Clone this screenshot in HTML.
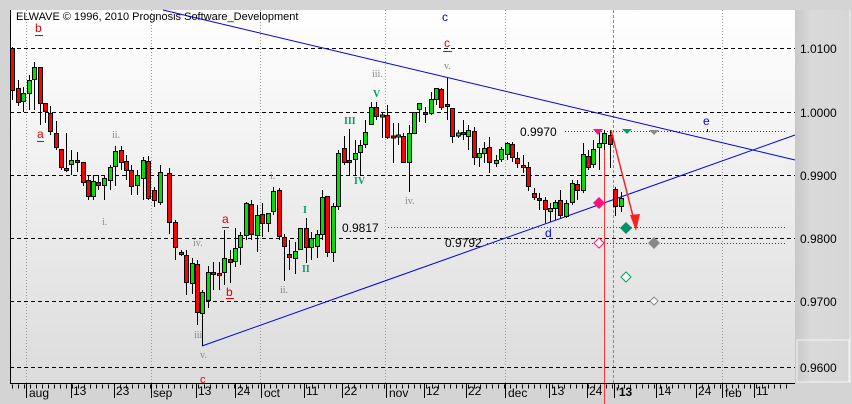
<!DOCTYPE html>
<html><head><meta charset="utf-8"><style>
html,body{margin:0;padding:0;background:#d4d4d4;}
svg{display:block;font-family:"Liberation Sans",sans-serif;}
</style></head><body>
<svg width="852" height="404" viewBox="0 0 852 404" xmlns="http://www.w3.org/2000/svg">
<defs>
<linearGradient id="bg" x1="0" y1="0" x2="0" y2="1"><stop offset="0" stop-color="#ffffff"/><stop offset="1" stop-color="#dcdcdc"/></linearGradient>
<linearGradient id="ax" x1="0" y1="0" x2="1" y2="0"><stop offset="0" stop-color="#c8c8c8"/><stop offset="0.3" stop-color="#dadada"/><stop offset="1" stop-color="#d6d6d6"/></linearGradient>
</defs>
<rect x="0" y="0" width="852" height="404" fill="#d4d4d4"/>
<rect x="10" y="10" width="785" height="373" fill="url(#bg)"/>
<rect x="795" y="10" width="55" height="373" fill="url(#ax)"/>
<rect x="797" y="340" width="52" height="42" fill="none" stroke="#f4f4f4" stroke-width="1"/>
<line x1="850" y1="10" x2="850" y2="383" stroke="#f0f0f0"/>
<line x1="10.5" y1="10" x2="10.5" y2="384" stroke="#000"/>
<!-- vertical grid -->
<g stroke="#999" stroke-dasharray="1,2">
<line x1="26.5" y1="10" x2="26.5" y2="383"/>
<line x1="151.5" y1="10" x2="151.5" y2="383"/>
<line x1="260.5" y1="10" x2="260.5" y2="383"/>
<line x1="385.5" y1="10" x2="385.5" y2="383"/>
<line x1="505.5" y1="10" x2="505.5" y2="383"/>
<line x1="722.5" y1="10" x2="722.5" y2="383"/>
</g>
<line x1="613.5" y1="10" x2="613.5" y2="383" stroke="#888" stroke-dasharray="3,2"/>
<!-- horizontal dashed -->
<g stroke="#000" stroke-dasharray="4,3">
<line x1="10" y1="48.5" x2="795" y2="48.5"/>
<line x1="10" y1="112.5" x2="795" y2="112.5"/>
<line x1="10" y1="175.5" x2="795" y2="175.5"/>
<line x1="10" y1="238.5" x2="795" y2="238.5"/>
<line x1="10" y1="301.5" x2="795" y2="301.5"/>
<line x1="10" y1="367.5" x2="795" y2="367.5"/>
</g>
<text x="16" y="20" font-size="11" fill="#000">ELWAVE © 1996, 2010 Prognosis Software_Development</text>
<!-- red dotted levels -->
<g stroke="#e00000" stroke-dasharray="1,2">
<line x1="565" y1="131.5" x2="787" y2="131.5"/>
<line x1="388" y1="227.5" x2="786" y2="227.5"/>
<line x1="487" y1="243.5" x2="786" y2="243.5"/>
</g>
<text x="520" y="136" font-size="12" fill="#000">0.9970</text>
<text x="342" y="232" font-size="12" fill="#000">0.9817</text>
<text x="445" y="247" font-size="12" fill="#000">0.9792</text>
<!-- trend lines -->
<line x1="163" y1="10" x2="795" y2="160" stroke="#0000e0" stroke-width="1"/>
<line x1="202" y1="346" x2="795" y2="135" stroke="#0000e0" stroke-width="1"/>
<!-- red vertical -->
<line x1="604.5" y1="130" x2="604.5" y2="404" stroke="#ff3030" stroke-width="1"/>
<!-- candles wicks -->
<path stroke="#000" stroke-width="1" fill="none" d="
M12.5 47V100M18.5 80V106M23.5 87V112M29.5 75V110M34.5 62V110M40.5 67V125M45.5 103V123M50.5 106V135M56.5 121V150M61.5 149V170M66.5 133V172M71.5 150V175M77.5 152V172M83.5 162V186M88.5 175V200M93.5 175V200M98.5 175V190M104.5 175V200M110.5 165V190M115.5 146V186M121.5 146V170M126.5 155V180M131.5 165V195M137.5 170V195M143.5 157V200M148.5 156V200M154.5 187V207M160.5 165V205M169.5 168V234M175.5 220V260M181.5 250V256M186.5 250V295M192.5 258V294M197.5 260V325M202.5 290V346M208.5 266V308M213.5 262V290M219.5 262V290M224.5 230V285M230.5 250V283M235.5 228V267M240.5 232V265M246.5 202V240M251.5 200V240M257.5 205V252M262.5 203V237M268.5 213V232M273.5 187V215M279.5 188V240M284.5 234V281M289.5 240V270M295.5 242V274M300.5 228V250M306.5 218V263M311.5 232V260M317.5 230V258M322.5 190V240M327.5 196V257M333.5 203V262M338.5 150V210M344.5 136V165M349.5 129V175M355.5 140V175M360.5 140V175M365.5 120V148M371.5 102V125M376.5 102V120M382.5 113V138M387.5 105V139M393.5 123V163M398.5 123V145M403.5 133V163M409.5 125V192M414.5 112V133M419.5 103V122M425.5 107V123M431.5 92V115M436.5 88V105M441.5 88V110M447.5 78V120M452.5 108V143M458.5 130V138M463.5 120V140M468.5 125V150M474.5 127V165M479.5 148V167M484.5 142V163M489.5 137V173M496.5 155V167M501.5 147V162M507.5 142V160M512.5 142V162M517.5 152V168M523.5 155V173M528.5 162V191M534.5 188V200M539.5 193V210M545.5 197V223M550.5 203V222M555.5 200V220M560.5 190V218M566.5 200V218M572.5 180V205M577.5 180V200M583.5 143V193M588.5 150V170M593.5 140V168M599.5 130V170M604.5 130V150M610.5 130V168M615.5 187V216M621.5 192V212"/>
<g stroke="#000" stroke-width="1" fill="#ff0000">
<rect x="10.5" y="48.5" width="4" height="42"/><rect x="16.5" y="88.5" width="4" height="14"/><rect x="38.5" y="67.5" width="4" height="36"/><rect x="43.5" y="103.5" width="4" height="8"/><rect x="48.5" y="113.5" width="4" height="18"/><rect x="54.5" y="133.5" width="4" height="14"/><rect x="59.5" y="149.5" width="4" height="18"/><rect x="64.5" y="168.5" width="4" height="2"/><rect x="75.5" y="160.5" width="4" height="2"/><rect x="81.5" y="162.5" width="4" height="20"/><rect x="86.5" y="180.5" width="4" height="16"/><rect x="96.5" y="182.5" width="4" height="3"/><rect x="119.5" y="150.5" width="4" height="12"/><rect x="124.5" y="161.5" width="4" height="9"/><rect x="129.5" y="170.5" width="4" height="16"/><rect x="146.5" y="161.5" width="4" height="37"/><rect x="152.5" y="190.5" width="4" height="10"/><rect x="167.5" y="173.5" width="4" height="49"/><rect x="173.5" y="222.5" width="4" height="25"/><rect x="179.5" y="252.5" width="4" height="2"/><rect x="184.5" y="255.5" width="4" height="27"/><rect x="195.5" y="264.5" width="4" height="48"/><rect x="211.5" y="272.5" width="4" height="2"/><rect x="217.5" y="273.5" width="4" height="2"/><rect x="228.5" y="259.5" width="4" height="3"/><rect x="249.5" y="204.5" width="4" height="30"/><rect x="260.5" y="214.5" width="4" height="9"/><rect x="277.5" y="190.5" width="4" height="46"/><rect x="282.5" y="237.5" width="4" height="9"/><rect x="287.5" y="254.5" width="4" height="3"/><rect x="304.5" y="228.5" width="4" height="19"/><rect x="325.5" y="196.5" width="4" height="56"/><rect x="342.5" y="148.5" width="4" height="14"/><rect x="347.5" y="160.5" width="4" height="2"/><rect x="374.5" y="107.5" width="4" height="9"/><rect x="385.5" y="115.5" width="4" height="22"/><rect x="391.5" y="136" width="4" height="2"/><rect x="401.5" y="136.5" width="4" height="26"/><rect x="423.5" y="112.5" width="4" height="2"/><rect x="439.5" y="89.5" width="4" height="18"/><rect x="445.5" y="104.5" width="4" height="2"/><rect x="450.5" y="108.5" width="4" height="28"/><rect x="461.5" y="132.5" width="4" height="2"/><rect x="472.5" y="131.5" width="4" height="26"/><rect x="487.5" y="147.5" width="4" height="15"/><rect x="510.5" y="144.5" width="4" height="13"/><rect x="515.5" y="158.5" width="4" height="5"/><rect x="521.5" y="165.5" width="4" height="2"/><rect x="526.5" y="167.5" width="4" height="19"/><rect x="532.5" y="193.5" width="4" height="4"/><rect x="537.5" y="198.5" width="4" height="2"/><rect x="543.5" y="200.5" width="4" height="9"/><rect x="558.5" y="200.5" width="4" height="15"/><rect x="575.5" y="184.5" width="4" height="6"/><rect x="586.5" y="156.5" width="4" height="11"/><rect x="608.5" y="135.5" width="4" height="9"/><rect x="613.5" y="189.5" width="4" height="17"/>
</g>
<g stroke="#000" stroke-width="1" fill="#00e000">
<rect x="21.5" y="93.5" width="4" height="8"/><rect x="27.5" y="80.5" width="4" height="13"/><rect x="32.5" y="67.5" width="4" height="12"/><rect x="69.5" y="160.5" width="4" height="4"/><rect x="91.5" y="181.5" width="4" height="15"/><rect x="102.5" y="178.5" width="4" height="7"/><rect x="108.5" y="167.5" width="4" height="13"/><rect x="113.5" y="151.5" width="4" height="15"/><rect x="135.5" y="175.5" width="4" height="10"/><rect x="141.5" y="160.5" width="4" height="18"/><rect x="158.5" y="172.5" width="4" height="30"/><rect x="190.5" y="263.5" width="4" height="20"/><rect x="200.5" y="292.5" width="4" height="21"/><rect x="206.5" y="272.5" width="4" height="28"/><rect x="222.5" y="258.5" width="4" height="14"/><rect x="233.5" y="248.5" width="4" height="13"/><rect x="238.5" y="235.5" width="4" height="12"/><rect x="244.5" y="203.5" width="4" height="32"/><rect x="255.5" y="215.5" width="4" height="20"/><rect x="266.5" y="213.5" width="4" height="10"/><rect x="271.5" y="191.5" width="4" height="20"/><rect x="293.5" y="251.5" width="4" height="7"/><rect x="298.5" y="228.5" width="4" height="21"/><rect x="309.5" y="238.5" width="4" height="9"/><rect x="315.5" y="234.5" width="4" height="12"/><rect x="320.5" y="197.5" width="4" height="37"/><rect x="331.5" y="206.5" width="4" height="46"/><rect x="336.5" y="153.5" width="4" height="53"/><rect x="353.5" y="153.5" width="4" height="6"/><rect x="358.5" y="145.5" width="4" height="7"/><rect x="363.5" y="132.5" width="4" height="12"/><rect x="369.5" y="107.5" width="4" height="17"/><rect x="380.5" y="115" width="4" height="2"/><rect x="396.5" y="135" width="4" height="2"/><rect x="407.5" y="133.5" width="4" height="29"/><rect x="412.5" y="112.5" width="4" height="21"/><rect x="417.5" y="103.5" width="4" height="6"/><rect x="429.5" y="99.5" width="4" height="14"/><rect x="434.5" y="88.5" width="4" height="11"/><rect x="456.5" y="133" width="4" height="3"/><rect x="466.5" y="130.5" width="4" height="6"/><rect x="477.5" y="153.5" width="4" height="4"/><rect x="482.5" y="148.5" width="4" height="5"/><rect x="494.5" y="160.5" width="4" height="3"/><rect x="499.5" y="149.5" width="4" height="10"/><rect x="505.5" y="143.5" width="4" height="11"/><rect x="548.5" y="208.5" width="4" height="3"/><rect x="553.5" y="202.5" width="4" height="6"/><rect x="564.5" y="203.5" width="4" height="13"/><rect x="570.5" y="183.5" width="4" height="19"/><rect x="581.5" y="154.5" width="4" height="36"/><rect x="591.5" y="149.5" width="4" height="15"/><rect x="597.5" y="143.5" width="4" height="4"/><rect x="602.5" y="133.5" width="4" height="10"/><rect x="619.5" y="198.5" width="4" height="8"/>
</g>
<!-- arrow -->
<line x1="611" y1="130" x2="636" y2="228" stroke="#ff2020" stroke-width="1.5"/>
<polygon points="636,231 630,215 640,214" fill="#ff2020"/>
<!-- markers -->
<polygon points="593,129 603,129 598,135" fill="#ff1080"/>
<polygon points="622,129 632,129 627,134" fill="#00a060"/>
<polygon points="649,130 659,130 654,135" fill="#888"/>
<polygon points="599,197 605,203 599,209 593,203" fill="#ff1080"/>
<polygon points="626,222 632,228 626,234 620,228" fill="#00906a"/>
<polygon points="654,237 660,243 654,249 648,243" fill="#888"/>
<polygon points="599,238 604,243 599,248 594,243" fill="#fff" stroke="#ff1080"/>
<polygon points="626,272 631,277 626,282 621,277" fill="#fff" stroke="#00a060"/>
<polygon points="654,297 658,301 654,305 650,301" fill="#fff" stroke="#888"/>
<!-- wave labels -->
<g font-size="12">
<text x="703" y="125" fill="#0000e0">e</text>
<line x1="707.5" y1="129" x2="707.5" y2="132" stroke="#0000e0"/>
<text x="442" y="21" fill="#0000e0">c</text>
<text x="444" y="47" fill="#e00000">c</text><line x1="443" y1="51.5" x2="452" y2="51.5" stroke="#e00000"/>
<text x="545" y="237" fill="#0000e0">d</text>
<text x="35" y="32" fill="#e00000">b</text><line x1="35" y1="35.5" x2="43" y2="35.5" stroke="#e00000"/>
<text x="37" y="138" fill="#e00000">a</text><line x1="37" y1="141.5" x2="44" y2="141.5" stroke="#e00000"/>
<text x="222" y="223" fill="#e00000">a</text><line x1="222" y1="227.5" x2="229" y2="227.5" stroke="#e00000"/>
<text x="226" y="296" fill="#e00000">b</text><line x1="226" y1="298.5" x2="234" y2="298.5" stroke="#e00000"/>
<text x="200" y="383" fill="#e00000" font-size="11">c</text>
</g>
<g font-size="10" fill="#888" font-family="Liberation Serif,serif">
<text x="112" y="138">ii.</text>
<text x="102" y="225">i.</text>
<text x="193" y="246">iv.</text>
<text x="194" y="338">iii</text>
<text x="200" y="358">v.</text>
<text x="270" y="179">i.</text>
<text x="280" y="293">ii.</text>
<text x="372" y="77">iii.</text>
<text x="444" y="69">v.</text>
<text x="405" y="204">iv.</text>
</g>
<g font-size="10" fill="#00a060" font-family="Liberation Serif,serif" font-weight="bold">
<text x="303" y="213">I</text>
<text x="302" y="272">II</text>
<text x="344" y="124">III</text>
<text x="354" y="184">IV</text>
<text x="373" y="97">V</text>
</g>
<!-- right axis labels -->
<g font-size="12" fill="#000">
<text x="800" y="53">1.0100</text>
<text x="800" y="117">1.0000</text>
<text x="800" y="180">0.9900</text>
<text x="800" y="243">0.9800</text>
<text x="800" y="306">0.9700</text>
<text x="800" y="372">0.9600</text>
</g>
<!-- bottom axis -->
<line x1="10" y1="383.5" x2="795" y2="383.5" stroke="#000"/>
<path stroke="#000" d="M26.5 384V398M71.5 384V398M114.5 384V398M151.5 384V398M196.5 384V398M235.5 384V398M261.5 384V398M304.5 384V398M342.5 384V398M386.5 384V398M424.5 384V398M466.5 384V398M505.5 384V398M549.5 384V398M587.5 384V398M614.5 384V398M656.5 384V398M696.5 384V398M722.5 384V398M754.5 384V398"/>
<path stroke="#000" stroke-dasharray="1,5" d="M12 386.5H790" stroke-width="4"/>
<g font-size="12" fill="#000">
<text x="29" y="397">aug</text>
<text x="73" y="395">13</text>
<text x="116" y="395">23</text>
<text x="153" y="397">sep</text>
<text x="198" y="395">13</text>
<text x="237" y="395">24</text>
<text x="264" y="397">oct</text>
<text x="306" y="395">11</text>
<text x="344" y="395">22</text>
<text x="389" y="397">nov</text>
<text x="426" y="395">12</text>
<text x="468" y="395">22</text>
<text x="508" y="397">dec</text>
<text x="551" y="395">13</text>
<text x="589" y="395">24</text>
<text x="616" y="396" font-weight="bold">'13</text>
<text x="658" y="395">14</text>
<text x="698" y="395">24</text>
<text x="725" y="397">feb</text>
<text x="756" y="395">11</text>
</g>
</svg>
</body></html>
